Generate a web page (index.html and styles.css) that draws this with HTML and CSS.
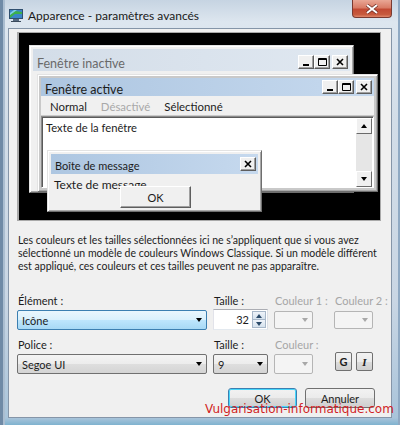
FILE: index.html
```html
<!DOCTYPE html>
<html lang="fr">

<head>
    <meta charset="UTF-8">
    <meta name="viewport" content="width=device-width, initial-scale=1.0">
    <title>Apparence - paramètres avancés</title>
    <link rel="stylesheet" href="styles.css">
</head>

<body>
    <div class="dialog">
        <div class="titlebar">
            <svg class="app-icon" width="16" height="16" viewBox="0 0 16 16">
                <rect x="1" y="2" width="14" height="10" fill="#2f4f6f" />
                <rect x="2" y="3" width="12" height="8" fill="#3a86c8" />
                <path d="M2 8 L7 4 L14 5 L14 7 L7 7 L2 11 Z" fill="#3cb04a" />
                <path d="M2 6 L6 3 L9 3 L2 8 Z" fill="#7fd0e8" />
                <rect x="5" y="12" width="6" height="2" fill="#566a80" />
                <rect x="3" y="14" width="10" height="1" fill="#3a4a5c" />
            </svg>
            <span class="title">Apparence - paramètres avancés</span>
            <div class="close-btn">
                <svg width="14" height="10" viewBox="0 0 14 10">
                    <path d="M2 1 L12 9 M12 1 L2 9" stroke="#6b2a20" stroke-width="3.4" />
                    <path d="M2 1 L12 9 M12 1 L2 9" stroke="#fff" stroke-width="2" />
                </svg>
            </div>
        </div>

        <div class="client">
            <div class="preview">
                <div class="win inactive">
                    <div class="caption">
                        <span>Fenêtre inactive</span>
                        <div class="caps">
                            <span class="cap-btn"><svg width="8" height="8"><rect x="1" y="6" width="6" height="2" /></svg></span>
                            <span class="cap-btn"><svg width="9" height="8"><path d="M0.5 0.5 H8.5 V7.5 H0.5 Z M0.5 1.5 H8.5" fill="none" stroke="#000" /></svg></span>
                            <span class="cap-btn gap"><svg width="8" height="8"><path d="M1 1 L7 7 M7 1 L1 7" stroke="#000" stroke-width="1.6" /></svg></span>
                        </div>
                    </div>
                </div>

                <div class="win active">
                    <div class="caption">
                        <span>Fenêtre active</span>
                        <div class="caps">
                            <span class="cap-btn"><svg width="8" height="8"><rect x="1" y="6" width="6" height="2" /></svg></span>
                            <span class="cap-btn"><svg width="9" height="8"><path d="M0.5 0.5 H8.5 V7.5 H0.5 Z M0.5 1.5 H8.5" fill="none" stroke="#000" /></svg></span>
                            <span class="cap-btn gap"><svg width="8" height="8"><path d="M1 1 L7 7 M7 1 L1 7" stroke="#000" stroke-width="1.6" /></svg></span>
                        </div>
                    </div>
                    <div class="menu">
                        <span>Normal</span>
                        <span class="off">Désactivé</span>
                        <span>Sélectionné</span>
                    </div>
                    <div class="doc">
                        <div class="doc-text">Texte de la fenêtre</div>
                        <div class="vscroll">
                            <span class="sb-btn"><i class="tri up"></i></span>
                            <span class="sb-btn"><i class="tri"></i></span>
                        </div>
                    </div>
                </div>

                <div class="win msgbox">
                    <div class="caption">
                        <span>Boîte de message</span>
                        <div class="caps">
                            <span class="cap-btn"><svg width="8" height="8"><path d="M1 1 L7 7 M7 1 L1 7" stroke="#000" stroke-width="1.6" /></svg></span>
                        </div>
                    </div>
                    <div class="msg-text">Texte de message</div>
                    <div class="msg-ok">OK</div>
                </div>
            </div>

            <p class="note">
                Les couleurs et les tailles sélectionnées ici ne s’appliquent que si vous avez<br>
                sélectionné un modèle de couleurs Windows Classique. Si un modèle différent<br>
                est appliqué, ces couleurs et ces tailles peuvent ne pas apparaître.
            </p>

            <div class="fields">
                <label class="lbl">Élément :</label>
                <label class="lbl">Taille :</label>
                <label class="lbl dim">Couleur 1 :</label>
                <label class="lbl dim">Couleur 2 :</label>

                <div class="combo focus">Icône<i class="tri"></i></div>
                <div class="spin">
                    <span class="spin-val">32</span>
                    <span class="spin-btns">
                        <span class="spin-btn"><i class="tri up small"></i></span>
                        <span class="spin-btn"><i class="tri small"></i></span>
                    </span>
                </div>
                <div class="combo off"><i class="tri"></i></div>
                <div class="combo off"><i class="tri"></i></div>

                <label class="lbl row2">Police :</label>
                <label class="lbl row2">Taille :</label>
                <label class="lbl row2 dim">Couleur :</label>
                <span class="lbl row2"></span>

                <div class="combo tall">Segoe UI<i class="tri"></i></div>
                <div class="combo tall">9<i class="tri"></i></div>
                <div class="combo tall off"><i class="tri"></i></div>
                <div class="styles">
                    <span class="fmt-btn bold">G</span>
                    <span class="fmt-btn italic">I</span>
                </div>
            </div>

            <div class="actions">
                <button class="btn default">OK</button>
                <button class="btn">Annuler</button>
            </div>
        </div>

        <div class="watermark">Vulgarisation-informatique.com</div>
    </div>
</body>

</html>
```

FILE: styles.css
```css
* {
    box-sizing: border-box;
}

body {
    margin: 0;
    font-family: Lato, "Noto Sans", sans-serif;
    font-size: 11px;
    color: #1c1c1c;
    background: #fff;
}

/* outer glass frame */
.dialog {
    position: relative;
    width: 400px;
    height: 425px;
    padding: 0 8px 7px;
    display: flex;
    flex-direction: column;
    background: linear-gradient(180deg, #c6d4e2 0, #dde6ef 22px, #d2dde8 120px, #c9d6e4 300px, #a9c4da 418px, #7fb2cf 425px);
    box-shadow: inset 3px 0 #6f8aa6, inset 5px 0 #aabdd0, inset -2px 0 #8fa9c3;
}

.titlebar {
    flex-shrink: 0;
    height: 28px;
    display: flex;
    align-items: center;
}

.app-icon {
    margin: 2px 4px 0 0;
}

.title {
    font-size: 12px;
    color: #1a1a1a;
    margin-top: 2px;
}

.close-btn {
    margin-left: auto;
    align-self: flex-start;
    width: 40px;
    height: 18px;
    display: flex;
    align-items: center;
    justify-content: center;
    border: 1px solid #7a3a30;
    border-top: none;
    border-radius: 0 0 4px 4px;
    background: linear-gradient(180deg, #e9a795 0, #d97c66 45%, #c24a33 55%, #c75a3d 85%, #e0876a 100%);
}

.client {
    flex: 1;
    min-height: 0;
    background: #f0f0f0;
    border: 1px solid #8595a8;
    padding: 3px 10px 9px 8px;
    display: flex;
    flex-direction: column;
}

/* preview desktop */
.preview {
    flex-shrink: 0;
    position: relative;
    width: 364px;
    height: 189px;
    border: 1px solid #a9a9a9;
    border-left-width: 2px;
    background: #000;
    overflow: hidden;
}

.win {
    position: absolute;
    background: #f0f0f0;
    border: 1px solid;
    border-color: #e3e3e3 #6e6e6e #6e6e6e #e3e3e3;
    box-shadow: inset 1px 1px #fff, inset -1px -1px #a8a8a8;
    padding: 3px;
    display: flex;
    flex-direction: column;
}

.inactive {
    left: 10px;
    top: 12px;
    width: 325px;
    height: 148px;
}

.active {
    left: 18px;
    top: 41px;
    width: 341px;
    height: 118px;
    background: #c9c9c9;
}

.msgbox {
    left: 28px;
    top: 117px;
    width: 215px;
    height: 62px;
}

.caption {
    flex-shrink: 0;
    height: 20px;
    display: flex;
    align-items: center;
    padding: 0 2px 0 4px;
    font-size: 11px;
    background: linear-gradient(90deg, #adc6e1, #c6d9ee);
}

.caption > span {
    padding-top: 2px;
}

.inactive .caption {
    height: 22px;
    font-size: 12.5px;
    color: #6a6a6a;
    background: linear-gradient(90deg, #d3dde8, #e0e8f1);
}

.inactive .caption > span {
    padding-top: 6px;
}

.active .caption {
    height: 18px;
    font-size: 12.5px;
}

.active .caption > span {
    padding-top: 4px;
}

.caps {
    margin-left: auto;
    display: flex;
}

.inactive .caps {
    margin-top: 4px;
}

.cap-btn {
    width: 16px;
    height: 14px;
    display: flex;
    align-items: center;
    justify-content: center;
    background: #f0f0f0;
    border: 1px solid;
    border-color: #fff #5e5e5e #5e5e5e #fff;
    box-shadow: inset -1px -1px #a0a0a0;
}

.cap-btn.gap {
    margin-left: 2px;
}

.menu {
    flex-shrink: 0;
    height: 19px;
    display: flex;
    align-items: center;
    gap: 14px;
    padding: 2px 0 0 9px;
    background: #f0f0f0;
    font-size: 11.4px;
}

.menu .off {
    color: #a8a8a8;
}

.doc {
    flex: 1;
    display: flex;
    margin-top: 1px;
    background: #fff;
    border: 1px solid;
    border-color: #8a8a8a #fff #fff #8a8a8a;
    box-shadow: inset 1px 1px #5a5a5a;
}

.doc-text {
    flex: 1;
    padding: 4px 0 0 4px;
    font-size: 11.2px;
}

.vscroll {
    width: 16px;
    margin: 1px 1px 0 0;
    display: flex;
    flex-direction: column;
    justify-content: space-between;
    background: #e6e6e6;
}

.sb-btn {
    height: 16px;
    display: flex;
    align-items: center;
    justify-content: center;
    background: #f0f0f0;
    border: 1px solid;
    border-color: #fff #6a6a6a #6a6a6a #fff;
}

.msg-text {
    flex-shrink: 0;
    padding: 4px 0 0 3px;
    font-size: 12px;
    height: 12px;
    line-height: 14px;
}

.msg-ok {
    position: relative;
    align-self: flex-start;
    margin-left: 69px;
    width: 71px;
    height: 22px;
    display: flex;
    align-items: center;
    justify-content: center;
    font-size: 11px;
    background: #f0f0f0;
    border: 1px solid;
    border-color: #fff #5e5e5e #5e5e5e #fff;
    box-shadow: inset -1px -1px #a0a0a0;
}

.tri {
    display: inline-block;
    width: 0;
    height: 0;
    border-left: 3.5px solid transparent;
    border-right: 3.5px solid transparent;
    border-top: 4px solid #000;
}

.tri.up {
    border-top: none;
    border-bottom: 4px solid #000;
}

.tri.small {
    border-left-width: 3px;
    border-right-width: 3px;
    border-top-color: #2b4a6a;
    border-bottom-color: #2b4a6a;
}

/* explanation text */
.note {
    flex-shrink: 0;
    margin: 13px 0 0 1px;
    font-size: 10.5px;
    line-height: 13px;
}

/* settings grid */
.fields {
    display: grid;
    grid-template-columns: 190px 55px 54px 39px;
    column-gap: 6px;
}

.lbl {
    white-space: nowrap;
    line-height: 13px;
    margin: 21px 0 3px 1px;
}

.lbl.row2 {
    margin-top: 8px;
}

.lbl.dim {
    color: #a6a6a6;
}

.combo {
    position: relative;
    height: 20px;
    display: flex;
    align-items: center;
    padding-left: 4px;
    border: 1px solid #707070;
    border-radius: 2px;
    background: linear-gradient(180deg, #f4f4f4 0, #ececec 50%, #dedede 51%, #d4d4d4 100%);
}

.combo .tri {
    margin-left: auto;
    margin-right: 4px;
}

.combo.focus {
    border-color: #3c7fb1;
    background: linear-gradient(180deg, #eaf6fd 0, #d9f0fc 50%, #bee6fd 51%, #a7d9f5 100%);
}

.combo.off {
    width: 39px;
    height: 18px;
    margin-top: 1px;
    border-color: #b5b5b5;
    background: #f4f4f4;
}

.combo.off .tri {
    border-top-color: #a8a8a8;
}

.combo.tall.off {
    height: 20px;
    margin-top: 0;
}

.spin {
    height: 21px;
    margin-top: -1px;
    display: flex;
    align-items: center;
    background: #fff;
    border: 1px solid;
    border-color: #abadb3 #dbdfe6 #e3e9ef #e2e3ea;
    padding: 1px;
}

.spin-val {
    flex: 1;
    text-align: right;
    padding-right: 3px;
}

.spin-btns {
    width: 14px;
    height: 100%;
    display: flex;
    flex-direction: column;
}

.spin-btn {
    flex: 1;
    display: flex;
    align-items: center;
    justify-content: center;
    background: linear-gradient(180deg, #eef3f9, #d6e2ee);
    border: 1px solid #a7b7c9;
}

.spin-btn + .spin-btn {
    border-top: none;
}

.styles {
    display: flex;
    justify-content: flex-end;
    gap: 4px;
    margin-top: -2px;
}

.fmt-btn {
    width: 17px;
    height: 19px;
    display: flex;
    align-items: center;
    justify-content: center;
    border: 1px solid #707070;
    border-radius: 2px;
    font-size: 11px;
    background: linear-gradient(180deg, #f2f2f2 0, #ebebeb 50%, #dddddd 51%, #cfcfcf 100%);
}

.fmt-btn.bold {
    font-weight: bold;
}

.fmt-btn.italic {
    font-family: "Liberation Serif", serif;
    font-style: italic;
    font-weight: bold;
}

/* dialog buttons */
.actions {
    display: flex;
    justify-content: flex-end;
    gap: 8px;
    margin-top: 14px;
    padding-right: 6px;
}

.btn {
    width: 70px;
    height: 20px;
    padding: 0;
    font-family: inherit;
    font-size: 11px;
    color: #1c1c1c;
    border: 1px solid #707070;
    border-radius: 3px;
    background: linear-gradient(180deg, #f2f2f2 0, #ebebeb 50%, #dddddd 51%, #cfcfcf 100%);
}

.btn.default {
    width: 69px;
    border-color: #3c7fb1;
    box-shadow: inset 0 0 0 1px #48d7fb;
}

.watermark {
    position: absolute;
    left: 205px;
    top: 402px;
    font-family: "DejaVu Sans", sans-serif;
    font-size: 12px;
    color: #d01e24;
}
```
